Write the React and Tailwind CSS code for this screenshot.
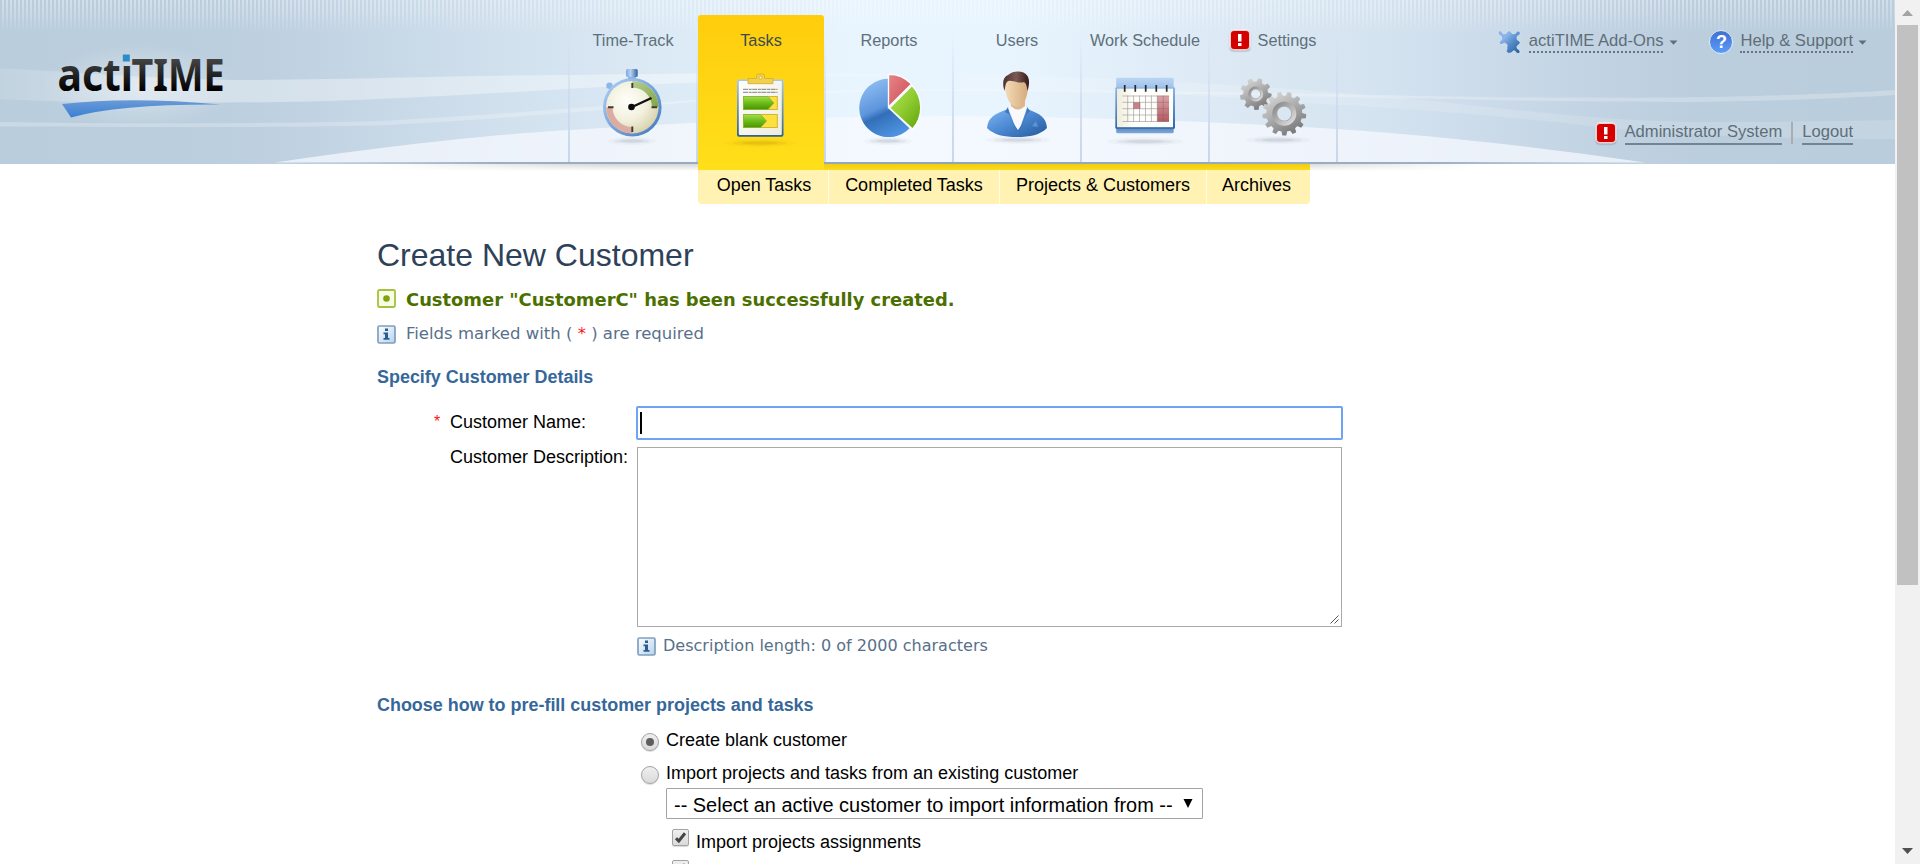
import React from 'react';

const ARIAL = "font-['Liberation_Sans',Arial,sans-serif]";
const VERDANA = "font-['DejaVu_Sans',Verdana,sans-serif]";

function HeaderBackdrop() {
  return (
    <svg className="absolute inset-0" width="1895" height="172" viewBox="0 0 1895 172" preserveAspectRatio="none">
      <defs>
        <linearGradient id="sky" x1="0" x2="1">
          <stop offset="0" stopColor="#bacddc" />
          <stop offset="0.12" stopColor="#bccfde" />
          <stop offset="0.17" stopColor="#c2d3e3" />
          <stop offset="0.27" stopColor="#d1e1ee" />
          <stop offset="0.35" stopColor="#dceaf5" />
          <stop offset="0.45" stopColor="#e8f4fe" />
          <stop offset="0.53" stopColor="#e8f4fe" />
          <stop offset="0.65" stopColor="#dce9f4" />
          <stop offset="0.73" stopColor="#d4e3f0" />
          <stop offset="0.84" stopColor="#c2d3e3" />
          <stop offset="0.9" stopColor="#bbcedd" />
          <stop offset="1" stopColor="#bacddc" />
        </linearGradient>
        <linearGradient id="fade" x1="0" x2="0" y1="0" y2="1">
          <stop offset="0" stopColor="#fff" />
          <stop offset="0.4" stopColor="#bbb" />
          <stop offset="1" stopColor="#000" />
        </linearGradient>
        <mask id="stripeMask"><rect width="1895" height="33" fill="url(#fade)" /></mask>
        <pattern id="stripes" width="4" height="33" patternUnits="userSpaceOnUse">
          <rect x="2" width="2" height="33" fill="#fff" opacity="0.36" />
        </pattern>
        <linearGradient id="edge" x1="0" x2="1">
          <stop offset="0.15" stopColor="#9fb2c5" stopOpacity="0" />
          <stop offset="0.26" stopColor="#9bb0c4" />
          <stop offset="0.5" stopColor="#91a5b9" />
          <stop offset="0.76" stopColor="#9bb0c4" />
          <stop offset="0.86" stopColor="#9fb2c5" stopOpacity="0" />
        </linearGradient>
        <linearGradient id="under" x1="0" x2="1">
          <stop offset="0.2" stopColor="#000" stopOpacity="0" />
          <stop offset="0.32" stopColor="#000" stopOpacity="0.16" />
          <stop offset="0.68" stopColor="#000" stopOpacity="0.16" />
          <stop offset="0.78" stopColor="#000" stopOpacity="0" />
        </linearGradient>
        <linearGradient id="underFade" x1="0" x2="0" y1="0" y2="1">
          <stop offset="0" stopColor="#fff" />
          <stop offset="1" stopColor="#000" />
        </linearGradient>
        <mask id="underMask"><rect y="164" width="1895" height="7" fill="url(#underFade)" /></mask>
        <linearGradient id="band" x1="0" x2="1">
          <stop offset="0" stopColor="#fff" stopOpacity="0.12" />
          <stop offset="0.2" stopColor="#fff" stopOpacity="0.34" />
          <stop offset="0.8" stopColor="#fff" stopOpacity="0.38" />
          <stop offset="1" stopColor="#fff" stopOpacity="0.1" />
        </linearGradient>
      </defs>
      <rect width="1895" height="164" fill="url(#sky)" />
      <rect width="1895" height="33" fill="url(#stripes)" mask="url(#stripeMask)" />
      <path d="M0 68.500C90 72 150 80 255 80C380 79 450 75.500 570 75C700 73 800 73 900 74L900 76C800 77 720 81 696 82.500C620 85 480 95 400 98C320 102 260 102.500 225 102.500C150 103 60 102.500 0 99Z" fill="url(#band)" />
      <path d="M0 122C120 124 290 124 390 120.500C520 113 620 104 696 100C800 90 860 89 952 89C1100 90 1200 92 1340 94C1480 98 1600 98 1680 97.500C1780 96 1850 93 1895 90L1895 95C1850 98 1780 101 1680 102C1550 102 1450 99 1340 97C1200 94 1100 92 952 91C860 91 800 93 696 102C620 108 520 118 390 125C290 128 120 127 0 126.500Z" fill="#fff" opacity="0.24" />
      <path d="M960 73C1100 78 1250 84 1380 96C1500 107 1600 122 1700 122C1780 122 1850 121 1895 120L1895 139C1800 139 1680 136 1600 127C1500 116 1400 107 1300 103C1180 92 1080 90 960 90Z" fill="#fff" opacity="0.15" />
      <path d="M275 162.500C400 144 500 134 570 130C700 121 830 116 952 116C1080 117 1210 121 1336 129C1430 135 1540 147 1645 162.500Z" fill="#f8faff" opacity="0.72" />
      <rect y="162" width="1895" height="2" fill="url(#edge)" />
      <rect y="164" width="1895" height="7" fill="url(#under)" mask="url(#underMask)" />
    </svg>
  );
}

function Logo() {
  return (
    <svg className="block" width="240" height="130" viewBox="0 0 240 130" aria-label="actiTIME">
      <defs>
        <linearGradient id="ink" gradientUnits="userSpaceOnUse" x1="0" x2="0" y1="59" y2="91">
          <stop offset="0" stopColor="#444" />
          <stop offset="0.5" stopColor="#222" />
          <stop offset="1" stopColor="#000" />
        </linearGradient>
        <linearGradient id="swoosh" x1="0" x2="0" y1="0" y2="1">
          <stop offset="0" stopColor="#6a9ad6" />
          <stop offset="1" stopColor="#3a80d4" />
        </linearGradient>
        <radialGradient id="glow">
          <stop offset="0" stopColor="#fff" stopOpacity="0.4" />
          <stop offset="1" stopColor="#fff" stopOpacity="0" />
        </radialGradient>
        <clipPath id="stem"><path d="M50 40H119.500V65.500H140V110H50Z" /></clipPath>
      </defs>
      <ellipse cx="140" cy="86" rx="100" ry="42" fill="url(#glow)" />
      <text x="57.500" y="91" clipPath="url(#stem)" fontFamily="'Noto Sans', sans-serif" fontWeight="700" fontSize="44" textLength="75.500" lengthAdjust="spacingAndGlyphs" fill="url(#ink)">acti</text>
      <text x="131.500" y="91" fontFamily="'Noto Sans', sans-serif" fontWeight="700" fontSize="44.500" textLength="93" lengthAdjust="spacingAndGlyphs" fill="url(#ink)">TIME</text>
      <rect x="122.800" y="54.500" width="7" height="7" fill="#2e8bcb" />
      <path d="M62 104Q130 96 221 104.600Q120 104 71 117.500Z" fill="url(#swoosh)" />
    </svg>
  );
}

function Shadow({ cx = 63, cy = 81, rx = 24, color = '#5b6472' }) {
  return (
    <g>
      <ellipse cx={cx} cy={cy} rx={rx} ry="4" fill={color} opacity="0.040" />
      <ellipse cx={cx} cy={cy} rx={rx * 0.75} ry="2.500" fill={color} opacity="0.08" />
      <ellipse cx={cx} cy={cy} rx={rx * 0.5} ry="1.500" fill={color} opacity="0.1" />
    </g>
  );
}

function Stopwatch() {
  return (
    <svg width="126" height="90" viewBox="0 0 126 90">
      <defs>
        <linearGradient id="swRim" x1="0" y1="0" x2="1" y2="1"><stop offset="0" stopColor="#b4d3f8" /><stop offset="1" stopColor="#3f76bd" /></linearGradient>
        <radialGradient id="swFace" cx="0.4" cy="0.38" r="0.65"><stop offset="0" stopColor="#fffffa" /><stop offset="0.55" stopColor="#f2f1df" /><stop offset="1" stopColor="#d8d3ae" /></radialGradient>
        <linearGradient id="swCrown" x1="0" x2="1"><stop offset="0" stopColor="#7fa9da" /><stop offset="0.4" stopColor="#b8d3f1" /><stop offset="1" stopColor="#30609f" /></linearGradient>
        <linearGradient id="swGreen" x1="0" y1="0" x2="1" y2="1"><stop offset="0" stopColor="#b5cd92" /><stop offset="1" stopColor="#7fa544" /></linearGradient>
      </defs>
      <Shadow cx={62} cy={81} />
      <rect x="58" y="15" width="8" height="5" fill="#88aee0" />
      <rect x="56" y="9" width="11.700" height="8" rx="1.500" fill="url(#swCrown)" />
      <circle cx="39.500" cy="25.700" r="3.200" fill="#8fb6e8" />
      <circle cx="62.300" cy="47.200" r="29.300" fill="url(#swRim)" />
      <circle cx="62.300" cy="47.200" r="26.300" fill="url(#swFace)" />
      <path d="M62.300 21A26.200 26.200 0 0 1 88.500 47.200H82A19.800 19.800 0 0 0 62.300 27.500Z" fill="url(#swGreen)" />
      <path d="M62.300 73.400A26.200 26.200 0 0 1 36.100 47.200H42.500A19.800 19.800 0 0 0 62.300 67Z" fill="#dbaca2" />
      <path d="M62.300 23v5M62.300 66.500v5.500M38 47.200h5.500M81.500 47.200h5.500" stroke="#3b3b38" strokeWidth="1.900" />
      <path d="M61.500 47.200L81.500 38" stroke="#111" strokeWidth="2.300" />
      <circle cx="61.500" cy="47" r="3.300" fill="#0b0b0b" />
    </svg>
  );
}

function Clipboard() {
  return (
    <svg width="126" height="90" viewBox="0 0 126 90">
      <defs>
        <linearGradient id="cbRim" x1="0" x2="0" y1="0" y2="1"><stop offset="0" stopColor="#a8c8ec" /><stop offset="1" stopColor="#2c6094" /></linearGradient>
        <linearGradient id="cbPaper" x1="0" y1="0" x2="1" y2="1"><stop offset="0" stopColor="#ffffff" /><stop offset="1" stopColor="#ededdb" /></linearGradient>
        <linearGradient id="cbGreen" x1="0" x2="0" y1="0" y2="1"><stop offset="0" stopColor="#9ee052" /><stop offset="0.5" stopColor="#6cbb16" /><stop offset="1" stopColor="#479507" /></linearGradient>
      </defs>
      <Shadow cx={62} cy={83} rx={36} color="#8a5d00" />
      <rect x="39" y="19.500" width="46.500" height="57.200" rx="2" fill="url(#cbRim)" />
      <rect x="40.800" y="21" width="43" height="54" rx="1" fill="url(#cbPaper)" />
      <path d="M50 18.500h8.500V16q0-2 2-2h4q2 0 2 2v2.500h8.500v5.200H50Z" fill="#f0d052" stroke="#d9b02a" strokeWidth="0.900" />
      <circle cx="62.500" cy="17.600" r="1.500" fill="#fdf3b0" stroke="#c49a20" strokeWidth="0.600" />
      <path d="M45 29.300h34.500M45 32.300h34.500" stroke="#808080" strokeWidth="1" strokeDasharray="5 0.700 3 0.500" />
      <rect x="45.500" y="36.500" width="33.800" height="13" fill="#fce13c" stroke="#d3b338" />
      <rect x="45.500" y="54.500" width="33.800" height="13" fill="#fce13c" stroke="#d3b338" />
      <path d="M45.500 36.500H70L75.800 43L70 49.500H45.500Z" fill="url(#cbGreen)" stroke="#8fae30" strokeWidth="0.800" />
      <path d="M45.500 54.500H62.500L68.500 61L62.500 67.500H45.500Z" fill="url(#cbGreen)" stroke="#8fae30" strokeWidth="0.800" />
    </svg>
  );
}

function Pie() {
  return (
    <svg width="126" height="90" viewBox="0 0 126 90">
      <defs>
        <linearGradient id="piB" x1="0.200" y1="0" x2="0.600" y2="1"><stop offset="0" stopColor="#92c0f3" /><stop offset="0.5" stopColor="#5d95dc" /><stop offset="0.62" stopColor="#336fb8" /><stop offset="1" stopColor="#4d92e0" /></linearGradient>
        <linearGradient id="piR" x1="0" y1="0" x2="1" y2="1"><stop offset="0" stopColor="#e88488" /><stop offset="1" stopColor="#c94c54" /></linearGradient>
        <linearGradient id="piG" x1="0" y1="0" x2="1" y2="1"><stop offset="0" stopColor="#b8e65e" /><stop offset="0.5" stopColor="#8fcb2f" /><stop offset="1" stopColor="#5fa30c" /></linearGradient>
      </defs>
      <Shadow cx={62} cy={81} />
      <path d="M62 48V18.700A29.200 29.200 0 1 0 83.500 68.200Z" fill="url(#piB)" />
      <path d="M62.500 47V14.300A32 32 0 0 1 85.500 24Z" fill="url(#piR)" stroke="#fbfdff" strokeWidth="1.400" />
      <path d="M63.500 48L86 25.500A32 32 0 0 1 86.500 69Z" fill="url(#piG)" stroke="#fbfdff" strokeWidth="1.400" />
    </svg>
  );
}

function UserFigure() {
  return (
    <svg width="126" height="90" viewBox="0 0 126 90">
      <defs>
        <linearGradient id="usCoat" x1="0" y1="0" x2="1" y2="1"><stop offset="0" stopColor="#83b8f5" /><stop offset="0.5" stopColor="#4a88d1" /><stop offset="1" stopColor="#245799" /></linearGradient>
        <linearGradient id="usSkin" x1="0" x2="1"><stop offset="0" stopColor="#f5dcb9" /><stop offset="1" stopColor="#d5aa7c" /></linearGradient>
        <linearGradient id="usHair" x1="0" x2="1"><stop offset="0" stopColor="#4e3030" /><stop offset="0.5" stopColor="#7c5a55" /><stop offset="1" stopColor="#331919" /></linearGradient>
      </defs>
      <Shadow cx={64} cy={80} rx={32} />
      <path d="M33 68C34 57 41 54 54 49L64 47L73 49C86 54 92 57 93 68C86 75 76 77 63 77C50 77 40 75 33 68Z" fill="url(#usCoat)" />
      <path d="M54 48L64 74L73 48Q64 43 54 48Z" fill="#f7f9fb" />
      <path d="M54 47L51 52L55 54L64 75L73 54L76 51L73 47C73 55 69 64 64 70C58 62 55 55 54 47Z" fill="#3c76bd" />
      <path d="M57 40H71V46Q64 53 57 46Z" fill="#dfb78b" />
      <path d="M50.500 24Q50.500 16 62 17Q74.500 16 74 26C74 36 70 47 63.500 47C56 47 51.500 37 50.500 24Z" fill="url(#usSkin)" />
      <path d="M50.500 31C48 23 49 17 54 15C60 10 70 10.500 73.500 16C76 20 75 26 73.500 31C73 26 72 23 70 22C65 24 58 20 54.500 21C51.500 22 51.500 26 50.500 31Z" fill="url(#usHair)" />
      <path d="M78 66L82 61L84 67Z" fill="#6a9fe0" opacity="0.700" />
    </svg>
  );
}

function Calendar() {
  return (
    <svg width="126" height="90" viewBox="0 0 126 90">
      <defs>
        <linearGradient id="caBack" x1="0" x2="0" y1="0" y2="1"><stop offset="0" stopColor="#bcd6f3" /><stop offset="0.2" stopColor="#9cc0ea" /><stop offset="0.85" stopColor="#4a7ab5" /><stop offset="1" stopColor="#7fa8d8" /></linearGradient>
        <linearGradient id="caRim" x1="0" x2="0" y1="0" y2="1"><stop offset="0" stopColor="#8fb6e6" /><stop offset="1" stopColor="#2d65aa" /></linearGradient>
        <linearGradient id="caRed" x1="0" x2="0" y1="0" y2="1"><stop offset="0" stopColor="#dda5a8" /><stop offset="1" stopColor="#b9575f" /></linearGradient>
        <linearGradient id="caPaper" x1="0" x2="1"><stop offset="0" stopColor="#eeecd9" /><stop offset="0.3" stopColor="#fffffb" /><stop offset="1" stopColor="#fdfdf8" /></linearGradient>
      </defs>
      <Shadow cx={63} cy={81.5} rx={38} />
      <rect x="34.200" y="17.700" width="57.500" height="55.600" rx="1.500" fill="url(#caBack)" />
      <rect x="33.300" y="27.300" width="59.700" height="41.500" rx="1" fill="url(#caRim)" />
      <rect x="35" y="28.700" width="56" height="38.500" fill="url(#caPaper)" />
      <rect x="75.300" y="35.700" width="11.700" height="26" fill="url(#caRed)" />
      <rect x="51.300" y="42.300" width="7" height="6.500" fill="#cb8085" />
      <path d="M40.500 36H87M40.500 42.300H87M40.500 48.700H87M40.500 55H87M40.500 61.500H87M45.700 35.500V62M51.600 35.500V62M57.500 35.500V62M63.500 35.500V62M69.400 35.500V62M75.300 35.500V62M81.200 35.500V62" stroke="#6f6468" strokeWidth="0.700" opacity="0.600" />
      <path d="M42.700 25v6.700M53.300 25v6.700M63.700 25v6.700M74.300 25v6.700M84.700 25v6.700" stroke="#26282c" strokeWidth="1.700" />
    </svg>
  );
}

function gearPath(cx, cy, outer, inner, teeth, hole) {
  const pts = [];
  const step = (Math.PI * 2) / teeth;
  for (let i = 0; i < teeth; i += 1) {
    const a = i * step + 0.12;
    [[-0.32, inner], [-0.19, outer], [0.19, outer], [0.32, inner]].forEach(([k, r]) => {
      pts.push(`${(cx + Math.cos(a + k * step) * r).toFixed(2)} ${(cy + Math.sin(a + k * step) * r).toFixed(2)}`);
    });
  }
  return `M${pts.join('L')}ZM${cx - hole} ${cy}a${hole} ${hole} 0 1 0 ${hole * 2} 0a${hole} ${hole} 0 1 0 ${-hole * 2} 0Z`;
}

function Gears() {
  return (
    <svg width="126" height="90" viewBox="0 0 126 90">
      <defs>
        <linearGradient id="geA" x1="0.200" y1="0" x2="0.800" y2="1"><stop offset="0" stopColor="#dadada" /><stop offset="0.45" stopColor="#adadad" /><stop offset="1" stopColor="#707070" /></linearGradient>
        <linearGradient id="geB" x1="0" y1="0" x2="1" y2="1"><stop offset="0" stopColor="#868686" /><stop offset="1" stopColor="#e0e0e0" /></linearGradient>
      </defs>
      <Shadow cx={68} cy={80} rx={32} />
      <path d={gearPath(45.7, 34, 16, 12.5, 9, 4.6)} fillRule="evenodd" fill="url(#geA)" />
      <circle cx="45.700" cy="34" r="6.200" fill="none" stroke="url(#geB)" strokeWidth="2.600" />
      <path d={gearPath(74.3, 53.7, 22, 18, 13, 7)} fillRule="evenodd" fill="url(#geA)" />
      <circle cx="74.300" cy="53.700" r="9.800" fill="none" stroke="url(#geB)" strokeWidth="4.500" />
    </svg>
  );
}

function Alert() {
  return (
    <span className="flex h-5 w-5 items-center justify-center rounded-[4px] border border-white/80 bg-[#d40000] shadow-[0_1px_2px_rgba(0,0,0,0.45)] outline-1 outline-white/50">
      <svg width="6" height="14" viewBox="0 0 6 14"><path d="M1 1h3.500v7.500H1zM1 10h3.500v3H1z" fill="#fff" /></svg>
    </span>
  );
}

function Puzzle() {
  return (
    <svg width="24" height="24" viewBox="0 0 24 24">
      <defs><linearGradient id="pz" x1="0" y1="0" x2="1" y2="1"><stop offset="0" stopColor="#8fb4e6" /><stop offset="0.3" stopColor="#8ab4e8" /><stop offset="0.6" stopColor="#5088c6" /><stop offset="1" stopColor="#2a5a9c" /></linearGradient></defs>
      <path d="M1.200 2.600C1.600 0.300 4.600 0.200 5.200 2.600C5.600 4 6.600 3.800 8 3.600C9.600 3.600 9.600 2.800 10 1.800C11 0.200 13.600 0.400 14.200 2C14.600 3.200 15.200 3.800 17 3.600C18.600 3.600 18.800 3 19.200 2C20.200 0.400 23.200 1 23.200 3.200C23.200 5 21.800 5.200 20.800 5.800C19.800 6.600 20 8 20.200 9.400C20.400 10.800 23 10.400 23.200 12.600C23 15 20.600 14.800 20.200 16.200C19.800 17.800 20 18.600 21.200 19.200C23.400 20 23.600 23 21.400 23.500C19.200 23.800 18.800 22 17.800 21C16.800 20.200 15.600 21.600 14.600 22.600C13 23.800 9.800 23.600 9.400 21.400C9.200 20 10.600 18.600 9.800 17.600C11 15 8.800 12.200 6.400 13.600C5 15.200 2.400 15 2 13C1.800 11 4 10.800 4.400 9.400C4.800 8 4.800 6.600 3.600 5.800C2.200 5.200 1 4.400 1.200 2.600Z" fill="url(#pz)" stroke="#dce8f4" strokeWidth="0.800" />
    </svg>
  );
}

function HelpBadge() {
  return (
    <span className="flex h-6 w-6 items-center justify-center rounded-full border border-[#dfe9f3] bg-linear-to-b from-[#3f70d0] to-[#5c9cfa]">
      <span className={`${ARIAL} text-[18px] leading-none font-bold text-white`}>?</span>
    </span>
  );
}

function Caret() {
  return <svg width="9" height="5" viewBox="0 0 9 5"><path d="M0.500 0.500h8L4.500 4.700z" fill="#5f6f78" /></svg>;
}

const TABS = [
  { label: 'Time-Track', Icon: Stopwatch },
  { label: 'Tasks', Icon: Clipboard, active: true },
  { label: 'Reports', Icon: Pie },
  { label: 'Users', Icon: UserFigure },
  { label: 'Work Schedule', Icon: Calendar },
  { label: 'Settings', Icon: Gears, alert: true },
];

function Divider() {
  return <span className="mt-[34px] h-[128px] w-0.5 shrink-0 bg-linear-to-b from-[#ccd8ee]/0 via-[#ccd8ee]/80 via-60% to-[#c9d5ee]" />;
}

function Tab({ label, Icon, active, alert }) {
  return (
    <div className="flex w-32 shrink-0">
      <Divider />
      <div className={`flex w-[126px] flex-col items-center ${active ? 'mt-[15px] h-[155px] rounded-t-[3px] bg-linear-to-b from-[#ffcd0c] to-[#ffdf1a]' : 'pt-[15px]'}`}>
        <div className={`mt-[13px] flex h-6 items-center gap-2 whitespace-nowrap text-[16.3px] ${active ? 'text-[#3d4a50]' : 'text-[#5e707b]'}`}>
          {alert && <Alert />}
          <span>{label}</span>
        </div>
        <div className="mt-2 h-[90px]"><Icon /></div>
      </div>
    </div>
  );
}

function Header() {
  return (
    <header className={`relative h-[164px] ${ARIAL}`}>
      <HeaderBackdrop />
      <div className="relative flex h-[164px]">
        <div className="w-[568px] shrink-0"><Logo /></div>
        {TABS.map((tab) => <Tab key={tab.label} {...tab} />)}
        <Divider />
        <div className="flex flex-1 flex-col items-end pt-[29px] text-[16.6px] text-[#5e6e79]">
          <div className="flex h-[26px] items-center pr-[28px]">
            <Puzzle />
            <span className="ml-2 border-b-2 border-dotted border-[#66757f] leading-[20px]">actiTIME Add-Ons</span>
            <span className="ml-[6px]"><Caret /></span>
            <span className="ml-[31px]"><HelpBadge /></span>
            <span className="ml-[7px] border-b-2 border-dotted border-[#66757f] leading-[20px]">Help &amp; Support</span>
            <span className="ml-[5px]"><Caret /></span>
          </div>
          <div className="mt-[66px] flex h-6 items-center pr-[42px]">
            <Alert />
            <span className="ml-[9px] border-b-2 border-[#73838f] leading-[22px]">Administrator System</span>
            <span className="ml-[9px] h-[22px] w-0.5 bg-[#a9adb3]" />
            <span className="ml-[9px] border-b-2 border-[#73838f] leading-[22px]">Logout</span>
          </div>
        </div>
      </div>
    </header>
  );
}

function SubMenu() {
  const item = 'flex h-[34px] items-center bg-[#fff2b3] mt-[6px] pb-1 text-black text-[18px] whitespace-nowrap justify-center';
  return (
    <nav className={`relative ml-[698px] flex h-10 w-[612px] gap-px rounded-b-[4px] bg-linear-to-b from-[#f0cc12] from-0% via-[#fadb18] via-[14%] to-[#fffbe8] to-[15%] ${ARIAL}`}>
      <div className="absolute top-0 left-0 h-1.5 w-[126px] bg-[#ffdf1a]" />
      <span className={`${item} w-[130px] rounded-bl-[4px] pl-0.5`}>Open Tasks</span>
      <span className={`${item} w-[170px]`}>Completed Tasks</span>
      <span className={`${item} w-[206px]`}>Projects &amp; Customers</span>
      <span className={`${item} w-[103px] rounded-br-[4px] pr-1`}>Archives</span>
    </nav>
  );
}

function InfoIcon() {
  return (
    <svg width="19" height="19" viewBox="0 0 19 19" className="shrink-0">
      <defs><linearGradient id="inf" x1="0" y1="0" x2="1" y2="1"><stop offset="0" stopColor="#fff" /><stop offset="1" stopColor="#b5d3ee" /></linearGradient></defs>
      <rect x="1" y="1" width="17" height="17" rx="1.500" fill="url(#inf)" stroke="#7f9fbf" strokeWidth="1.700" />
      <path d="M8 3.500h3v2.500H8zM6.500 7.500H11V13h1.500v1.800h-6V13H8V9.300H6.500z" fill="#2c5d92" />
    </svg>
  );
}

function SuccessIcon() {
  return (
    <svg width="19" height="19" viewBox="0 0 19 19" className="-mt-[3px] shrink-0">
      <rect x="1" y="1" width="17" height="17" rx="1.500" fill="#f8fce6" stroke="#a3c23e" strokeWidth="1.800" />
      <circle cx="9.500" cy="9.500" r="3.300" fill="#7fa30b" />
    </svg>
  );
}

function Radio({ checked }) {
  return (
    <span className="mt-[5px] flex h-[18px] w-[18px] shrink-0 items-center justify-center rounded-full border border-[#a3a3a3] bg-linear-to-b from-[#efefef] to-[#dadada] shadow-[0_1px_1px_rgba(0,0,0,0.15)]">
      {checked && <span className="h-2 w-2 rounded-full bg-[#5e5e5e]" />}
    </span>
  );
}

function Check() {
  return (
    <span className="flex h-[17px] w-[17px] shrink-0 items-center justify-center rounded-[2px] border border-[#a3a3a3] bg-linear-to-b from-[#efefef] to-[#dadada] shadow-[0_1px_1px_rgba(0,0,0,0.15)]">
      <svg width="13" height="13" viewBox="0 0 13 13"><path d="M2 7.200L4.800 10L11 2.300" stroke="#444" strokeWidth="3" fill="none" /></svg>
    </span>
  );
}

function SectionTitle({ children, className }) {
  return <h2 className={`h-6 text-[17.95px] leading-6 font-bold text-[#36679a] ${className}`}>{children}</h2>;
}

function Scrollbar() {
  return (
    <aside className="flex h-full w-[25px] shrink-0 flex-col items-center bg-[#f1f1f1]">
      <svg width="25" height="25" viewBox="0 0 25 25"><path d="M7 16L12.500 10L18 16z" fill="#a3a3a3" /></svg>
      <div className="h-[560px] w-[21px] bg-[#c1c1c1]" />
      <svg className="mt-auto" width="25" height="25" viewBox="0 0 25 25"><path d="M7 9L12.500 15L18 9z" fill="#505050" /></svg>
    </aside>
  );
}

export default function App() {
  return (
    <div className="flex h-[864px] w-[1920px] overflow-hidden bg-white">
      <div className="w-[1895px] shrink-0">
        <Header />
        <SubMenu />
        <main className={`ml-[377px] text-[18px] text-black ${ARIAL}`}>
          <h1 className="mt-[31px] h-10 text-[32px] leading-10 text-[#2e4158]">Create New Customer</h1>
          <div className={`mt-[13px] flex h-6 items-center gap-[10px] text-[17.9px] font-bold text-[#4b7000] ${VERDANA}`}>
            <SuccessIcon />
            <span>Customer "CustomerC" has been successfully created.</span>
          </div>
          <div className={`mt-[10px] flex h-6 items-center gap-[10px] text-[16.5px] text-[#58708a] ${VERDANA}`}>
            <InfoIcon />
            <span className="pt-px">Fields marked with ( <span className="text-[#ff1020]">*</span> ) are required</span>
          </div>
          <SectionTitle className="mt-[19px]">Specify Customer Details</SectionTitle>
          <div className="mt-[17px] flex h-[34px]">
            <span className="w-[73px] pt-1 pl-[57px] text-[16px] leading-6 text-[#ff1010]">*</span>
            <span className="w-[186px] pt-1 leading-6">Customer Name:</span>
            <div className="flex w-[707px] items-center rounded-[2px] border-2 border-[#6ea3f5] bg-white pl-0.5">
              <span className="h-[22px] w-0.5 bg-black" />
            </div>
          </div>
          <div className="mt-[7px] flex h-[180px]">
            <span className="ml-[73px] w-[187px] shrink-0 whitespace-nowrap leading-5">Customer Description:</span>
            <div className="flex w-[705px] items-end justify-end border border-[#a9a9a9] p-0.5">
              <svg width="9" height="9" viewBox="0 0 9 9"><path d="M0.500 8.500L8.500 0.500M4.500 8.500L8.500 4.500" stroke="#555" strokeWidth="1" /></svg>
            </div>
          </div>
          <div className={`mt-[7px] ml-[260px] flex h-6 items-center gap-[7px] text-[16.05px] text-[#58708a] ${VERDANA}`}>
            <InfoIcon />
            <span className="pt-px">Description length: 0 of 2000 characters</span>
          </div>
          <SectionTitle className="mt-[35px]">Choose how to pre-fill customer projects and tasks</SectionTitle>
          <div className="ml-[264px]">
            <label className="mt-[11px] flex h-6 gap-[7px] leading-6"><Radio checked />Create blank customer</label>
            <label className="mt-[9px] flex h-6 gap-[7px] leading-6"><Radio />Import projects and tasks from an existing customer</label>
            <div className="mt-[3px] ml-[25px] flex h-[31px] w-[537px] items-center justify-between rounded-[1px] border border-[#a3a3a3] pr-[9px] pl-[7px] text-[19.95px]">
              <span className="pt-0.5 leading-7 whitespace-nowrap">-- Select an active customer to import information from --</span>
              <svg width="10" height="9" viewBox="0 0 10 9"><path d="M0.500 0h9L5 9z" fill="#000" /></svg>
            </div>
            <label className="mt-[10px] ml-[31px] flex h-6 gap-[7px] leading-[26px]"><Check />Import projects assignments</label>
            <div className="mt-[7px] ml-[31px] flex h-6"><Check /></div>
          </div>
        </main>
      </div>
      <Scrollbar />
    </div>
  );
}
